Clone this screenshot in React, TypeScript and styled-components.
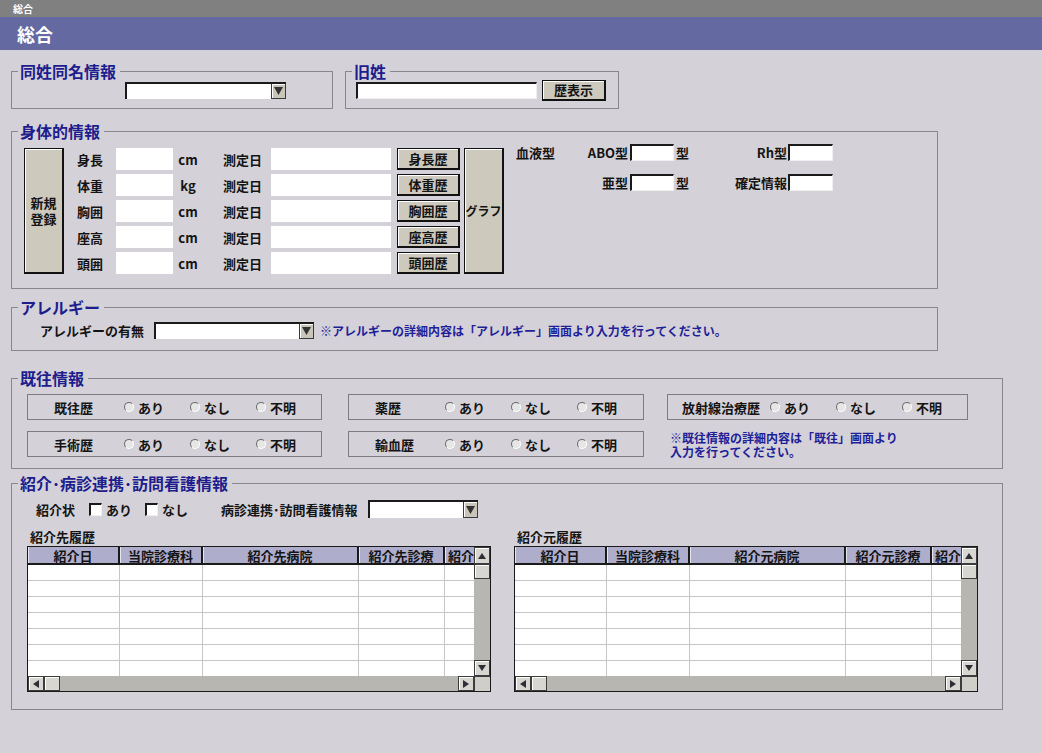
import React from 'react';
import styled, { createGlobalStyle } from 'styled-components';

const GlobalStyle = createGlobalStyle`
  * { box-sizing: border-box; }
  html, body { margin: 0; padding: 0; }
  body {
    background: #d4d2d8;
    font-family: 'Noto Sans CJK JP', 'Noto Sans', sans-serif;
    font-size: 13px;
    color: #141414;
  }
`;

const Page = styled.div`
  width: 1042px;
  height: 753px;
  overflow: hidden;
`;

const TopStrip = styled.div`
  height: 17px;
  background: #808080;
  color: #fff;
  font-size: 10px;
  font-weight: 700;
  line-height: 17px;
  padding-left: 13px;
`;

const TitleBar = styled.div`
  height: 33px;
  background: #6569a1;
  color: #fff;
  font-size: 18px;
  font-weight: 700;
  line-height: 34px;
  padding-left: 17px;
`;

const Content = styled.div`
  padding: 12px 0 0 11px;
  display: flex;
  flex-direction: column;
`;

const Row = styled.div`
  display: flex;
  gap: 12px;
`;

const Group = styled.fieldset<{ $w: number; $mt?: number }>`
  width: ${(p) => p.$w}px;
  margin: ${(p) => p.$mt ?? 0}px 0 0;
  padding: 0;
  min-width: 0;
  border: 1px solid #88878d;
`;

const Legend = styled.legend`
  margin-left: 6px;
  padding: 0 4px 0 2px;
  font-size: 16px;
  line-height: 18px;
  font-weight: 700;
  color: #1d1d8e;
`;

const Text = styled.span<{ $w?: number; $align?: string; $pl?: number; $pr?: number; $ml?: number }>`
  flex-shrink: 0;
  width: ${(p) => (p.$w ? `${p.$w}px` : 'auto')};
  text-align: ${(p) => p.$align ?? 'left'};
  padding-left: ${(p) => p.$pl ?? 0}px;
  padding-right: ${(p) => p.$pr ?? 0}px;
  margin-left: ${(p) => p.$ml ?? 0}px;
  font-weight: 700;
  line-height: 17px;
  white-space: nowrap;
`;

const Note = styled.span<{ $ml?: number }>`
  margin-left: ${(p) => p.$ml ?? 0}px;
  font-size: 12px;
  line-height: 14px;
  font-weight: 700;
  color: #1f1f98;
`;

const Field = styled.input<{ $w: number; $h: number; $sunken?: boolean }>`
  flex-shrink: 0;
  width: ${(p) => p.$w}px;
  height: ${(p) => p.$h}px;
  margin: 0;
  padding: 0;
  background: #fff;
  outline: none;
  border-style: solid;
  border-width: ${(p) => (p.$sunken ? '2px 1px 1px 2px' : '0')};
  border-color: #1a1a1a #efefef #efefef #1a1a1a;
`;

const Btn = styled.button<{ $w: number; $h?: number; $fs?: number; $ml?: number }>`
  flex-shrink: 0;
  width: ${(p) => p.$w}px;
  height: ${(p) => (p.$h ? `${p.$h}px` : 'auto')};
  margin: 0 0 0 ${(p) => p.$ml ?? 0}px;
  padding: 0;
  background: #cdc9bd;
  border: 1px solid #111;
  border-right-width: 2px;
  border-bottom-width: 2px;
  box-shadow: inset 1px 1px 0 #fff;
  font-family: inherit;
  font-size: ${(p) => p.$fs ?? 13}px;
  font-weight: 700;
  line-height: 16px;
  color: #141414;
`;

const SelectBox = styled.div<{ $w: number; $h: number; $ml?: number }>`
  flex-shrink: 0;
  display: flex;
  width: ${(p) => p.$w}px;
  height: ${(p) => p.$h}px;
  margin-left: ${(p) => p.$ml ?? 0}px;
  background: #fff;
  border-top: 2px solid #1a1a1a;
  border-left: 2px solid #1a1a1a;
`;

const SelectArrow = styled.div`
  margin-left: auto;
  width: 15px;
  height: 100%;
  display: flex;
  align-items: center;
  justify-content: center;
  background: #c9c5b9;
  border: 1px solid #3a3a3a;
  border-top: 0;
  box-shadow: inset 1px 1px 0 #fff;
`;

const Select = ({ w, h, ml }: { w: number; h: number; ml?: number }) => (
  <SelectBox $w={w} $h={h} $ml={ml}>
    <SelectArrow>
      <svg width="9" height="8" viewBox="0 0 9 8">
        <polygon points="0,0 9,0 4.5,8" fill="#333" />
      </svg>
    </SelectArrow>
  </SelectBox>
);

/* 同姓同名 / 旧姓 */
const NameBody = styled.div<{ $pl: number; $pt: number }>`
  display: flex;
  align-items: center;
  padding: ${(p) => p.$pt}px 0 7px ${(p) => p.$pl}px;
`;

/* 身体的情報 */
const PhysicalBody = styled.div`
  display: flex;
  padding: 8px 0 14px 12px;
`;

const MeasureList = styled.div`
  display: flex;
  flex-direction: column;
  gap: 4px;
  margin: 0 4px 0 13px;
`;

const MeasureRow = styled.div`
  display: flex;
  align-items: center;
  height: 22px;
`;

const BloodGrid = styled.div`
  align-self: flex-start;
  margin: -4px 0 0 12px;
  display: grid;
  grid-template-columns: 60px 54px 44px 22px 92px 45px;
  grid-auto-rows: 17px;
  row-gap: 13px;
  align-items: center;
`;

/* アレルギー */
const AllergyBody = styled.div`
  display: flex;
  align-items: center;
  padding: 6px 0 11px 28px;
`;

/* 既往情報 */
const HistoryGrid = styled.div`
  display: grid;
  grid-template-columns: 321px 319px 301px;
  row-gap: 11px;
  padding: 7px 0 9px 15px;
`;

const HistoryBox = styled.div<{ $w: number }>`
  width: ${(p) => p.$w}px;
  height: 26px;
  display: flex;
  align-items: center;
  border: 1px solid #7d7c82;
`;

const Option = styled.span`
  width: 66px;
  flex-shrink: 0;
  display: flex;
  align-items: center;
  gap: 4px;
  font-weight: 700;
`;

const Radio = styled.span`
  width: 10px;
  height: 10px;
  border-radius: 50%;
  border: 1px solid;
  border-color: #6a6a6a #fff #fff #6a6a6a;
  background: #e6e6e6;
`;

/* 紹介 */
const ReferralBody = styled.div`
  padding: 8px 0 17px 15px;
`;

const ReferralTop = styled.div`
  display: flex;
  align-items: center;
  height: 18px;
  margin-left: 9px;
`;

const Check = styled.span<{ $ml: number }>`
  flex-shrink: 0;
  width: 13px;
  height: 13px;
  margin: 0 4px 0 ${(p) => p.$ml}px;
  background: #fff;
  border-style: solid;
  border-width: 2px 1px 1px 2px;
  border-color: #1a1a1a #f0f0f0 #f0f0f0 #1a1a1a;
`;

const TablesRow = styled.div`
  display: flex;
  gap: 23px;
  margin-top: 11px;
`;

const TableCol = styled.div`
  display: flex;
  flex-direction: column;
`;

const Caption = styled.div`
  height: 17px;
  padding-left: 3px;
  font-weight: 700;
  line-height: 16px;
`;

const Frame = styled.div`
  width: 464px;
  height: 146px;
  border: 1px solid #1a1a1a;
  display: grid;
  grid-template-columns: 446px 16px;
  grid-template-rows: 129px 15px;
  background: #b7b6b0;
`;

const DataArea = styled.div`
  overflow: hidden;
  background: #fff;
`;

const HeadRow = styled.div`
  display: flex;
  height: 18px;
  background: #aeadcc;
  border-bottom: 2px solid #1a1a1a;
`;

const HeadCell = styled.div<{ $w: number }>`
  flex-shrink: 0;
  width: ${(p) => p.$w}px;
  border-right: 2px solid #1a1a1a;
  box-shadow: inset 1px 0 0 #e6e6f0;
  text-align: center;
  font-weight: 700;
  line-height: 17px;
  white-space: nowrap;
`;

const BodyRow = styled.div`
  display: flex;
  height: 16px;
  border-bottom: 1px solid #c6c6c6;
`;

const BodyCell = styled.div<{ $w: number }>`
  flex-shrink: 0;
  width: ${(p) => p.$w}px;
  border-right: 1px solid #c6c6c6;
`;

const VScroll = styled.div`
  display: flex;
  flex-direction: column;
`;

const HScroll = styled.div`
  display: flex;
`;

const ScrollBtn = styled.div<{ $w: number; $h: number }>`
  flex-shrink: 0;
  width: ${(p) => p.$w}px;
  height: ${(p) => p.$h}px;
  display: flex;
  align-items: center;
  justify-content: center;
  background: #d8d6d1;
  border: 1px solid #3c3c3c;
  box-shadow: inset 1px 1px 0 #fff;
`;

const Track = styled.div`
  flex: 1;
`;

const Corner = styled.div`
  background: #d0cec9;
  border-left: 1px solid #3c3c3c;
  border-top: 1px solid #3c3c3c;
`;

type Dir = 'up' | 'down' | 'left' | 'right';
const arrowPoints: Record<Dir, string> = {
  up: '1,8 5,2 9,8',
  down: '1,2 5,8 9,2',
  left: '8,1 2,5 8,9',
  right: '2,1 8,5 2,9',
};

const Arrow = ({ dir }: { dir: Dir }) => (
  <svg width="10" height="10" viewBox="0 0 10 10">
    <polygon points={arrowPoints[dir]} fill="#2e2e34" />
  </svg>
);

const measures = [
  { label: '身長', unit: 'cm', btn: '身長歴' },
  { label: '体重', unit: 'kg', btn: '体重歴' },
  { label: '胸囲', unit: 'cm', btn: '胸囲歴' },
  { label: '座高', unit: 'cm', btn: '座高歴' },
  { label: '頭囲', unit: 'cm', btn: '頭囲歴' },
];

const colWidths = [92, 83, 156, 86, 60];

const HistoryTable = ({ heads }: { heads: string[] }) => (
  <Frame>
    <DataArea>
      <HeadRow>
        {heads.map((h, i) => (
          <HeadCell key={h + i} $w={colWidths[i]}>
            {h}
          </HeadCell>
        ))}
      </HeadRow>
      {Array.from({ length: 7 }).map((_, r) => (
        <BodyRow key={r}>
          {colWidths.map((w, i) => (
            <BodyCell key={i} $w={w} />
          ))}
        </BodyRow>
      ))}
    </DataArea>
    <VScroll>
      <ScrollBtn $w={16} $h={17}>
        <Arrow dir="up" />
      </ScrollBtn>
      <ScrollBtn $w={16} $h={15} />
      <Track />
      <ScrollBtn $w={16} $h={16}>
        <Arrow dir="down" />
      </ScrollBtn>
    </VScroll>
    <HScroll>
      <ScrollBtn $w={16} $h={15}>
        <Arrow dir="left" />
      </ScrollBtn>
      <ScrollBtn $w={16} $h={15} />
      <Track />
      <ScrollBtn $w={16} $h={15}>
        <Arrow dir="right" />
      </ScrollBtn>
    </HScroll>
    <Corner />
  </Frame>
);

const HistoryItem = ({ label, w, wide }: { label: string; w: number; wide?: boolean }) => (
  <HistoryBox $w={w}>
    <Text $w={wide ? 102 : 96} $pl={wide ? 14 : 26}>
      {label}
    </Text>
    {['あり', 'なし', '不明'].map((o) => (
      <Option key={o}>
        <Radio />
        {o}
      </Option>
    ))}
  </HistoryBox>
);

export default function App() {
  return (
    <Page>
      <GlobalStyle />
      <TopStrip>総合</TopStrip>
      <TitleBar>総合</TitleBar>
      <Content>
        <Row>
          <Group $w={322}>
            <Legend>同姓同名情報</Legend>
            <NameBody $pl={113} $pt={2}>
              <Select w={161} h={17} />
            </NameBody>
          </Group>
          <Group $w={274}>
            <Legend>旧姓</Legend>
            <NameBody $pl={10} $pt={0}>
              <Field $w={181} $h={17} $sunken />
              <Btn $w={64} $h={21} $ml={5}>
                歴表示
              </Btn>
            </NameBody>
          </Group>
        </Row>

        <Group $w={927} $mt={13}>
          <Legend>身体的情報</Legend>
          <PhysicalBody>
            <Btn $w={40}>
              新規
              <br />
              登録
            </Btn>
            <MeasureList>
              {measures.map((m) => (
                <MeasureRow key={m.label}>
                  <Text $w={39}>{m.label}</Text>
                  <Field $w={57} $h={22} />
                  <Text $w={30} $align="center">
                    {m.unit}
                  </Text>
                  <Text $w={48} $ml={20}>
                    測定日
                  </Text>
                  <Field $w={120} $h={22} />
                  <Btn $w={63} $h={22} $ml={6}>
                    {m.btn}
                  </Btn>
                </MeasureRow>
              ))}
            </MeasureList>
            <Btn $w={40} $fs={12}>
              グラフ
            </Btn>
            <BloodGrid>
              <Text>血液型</Text>
              <Text $align="right" $pr={2}>
                ABO型
              </Text>
              <Field $w={44} $h={17} $sunken />
              <Text $pl={2}>型</Text>
              <Text $align="right" $pr={1}>
                Rh型
              </Text>
              <Field $w={45} $h={17} $sunken />
              <span />
              <Text $align="right" $pr={2}>
                亜型
              </Text>
              <Field $w={44} $h={17} $sunken />
              <Text $pl={2}>型</Text>
              <Text $align="right" $pr={1}>
                確定情報
              </Text>
              <Field $w={45} $h={17} $sunken />
            </BloodGrid>
          </PhysicalBody>
        </Group>

        <Group $w={927} $mt={9}>
          <Legend>アレルギー</Legend>
          <AllergyBody>
            <Text $w={114}>アレルギーの有無</Text>
            <Select w={160} h={17} />
            <Note $ml={6}>※アレルギーの詳細内容は「アレルギー」画面より入力を行ってください。</Note>
          </AllergyBody>
        </Group>

        <Group $w={992} $mt={18}>
          <Legend>既往情報</Legend>
          <HistoryGrid>
            <HistoryItem label="既往歴" w={295} />
            <HistoryItem label="薬歴" w={296} />
            <HistoryItem label="放射線治療歴" w={301} wide />
            <HistoryItem label="手術歴" w={295} />
            <HistoryItem label="輸血歴" w={296} />
            <Note $ml={3}>
              ※既往情報の詳細内容は「既往」画面より
              <br />
              入力を行ってください。
            </Note>
          </HistoryGrid>
        </Group>

        <Group $w={992} $mt={5}>
          <Legend>紹介･病診連携･訪問看護情報</Legend>
          <ReferralBody>
            <ReferralTop>
              <Text>紹介状</Text>
              <Check $ml={14} />
              <Text>あり</Text>
              <Check $ml={13} />
              <Text>なし</Text>
              <Text $ml={33}>病診連携･訪問看護情報</Text>
              <Select w={110} h={18} ml={10} />
            </ReferralTop>
            <TablesRow>
              <TableCol>
                <Caption>紹介先履歴</Caption>
                <HistoryTable heads={['紹介日', '当院診療科', '紹介先病院', '紹介先診療', '紹介状況']} />
              </TableCol>
              <TableCol>
                <Caption>紹介元履歴</Caption>
                <HistoryTable heads={['紹介日', '当院診療科', '紹介元病院', '紹介元診療', '紹介状況']} />
              </TableCol>
            </TablesRow>
          </ReferralBody>
        </Group>
      </Content>
    </Page>
  );
}
